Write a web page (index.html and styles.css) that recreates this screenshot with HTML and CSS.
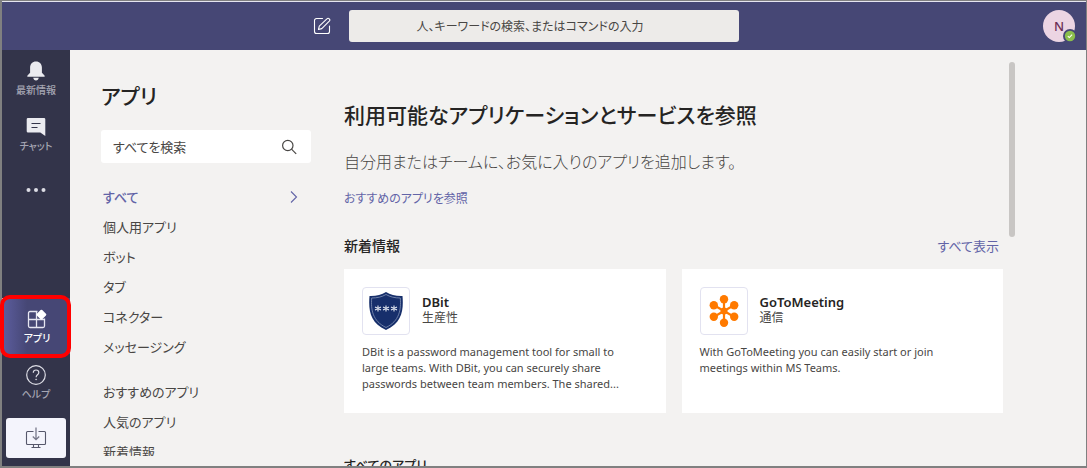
FILE: index.html
```html
<!DOCTYPE html>
<html lang="ja">
<head>
<meta charset="utf-8">
<title>アプリ</title>
<link rel="stylesheet" href="styles.css">
</head>
<body>
<div class="window">
  <header class="topbar">
    <div class="topbar-start">
      <button class="icon-button" type="button" aria-label="新しいチャット">
        <svg width="18" height="18" viewBox="0 0 18 18" fill="none" stroke="#fff" stroke-width="1.1" stroke-linecap="round" stroke-linejoin="round"><path d="M9.5 1.5H3.5a2 2 0 0 0-2 2v11a2 2 0 0 0 2 2h11a2 2 0 0 0 2-2V9"/><path d="M5.5 12.5l.8-3.4 7.6-7.2a1.6 1.6 0 0 1 2.4 2.3l-7.500 7.400-3.200.9z"/></svg>
      </button>
    </div>
    <input class="command" type="search" aria-label="検索" placeholder="人、キーワードの検索、またはコマンドの入力">
    <div class="topbar-end">
      <button class="avatar" type="button">N
        <svg class="presence" width="14" height="14" viewBox="0 0 14 14"><circle cx="7" cy="7" r="7" fill="#464775"/><circle cx="7" cy="7" r="5.200" fill="#8bbf4c"/><path d="M4.800 7.200l1.500 1.400 2.800-2.900" fill="none" stroke="#fff" stroke-width="1.100"/></svg>
      </button>
    </div>
  </header>
  <div class="body">
    <nav class="rail">
      <button class="rail-item" type="button">
        <svg width="20" height="20" viewBox="0 0 20 20" fill="#ebebf0"><path d="M10 .5c3.600 0 5.900 2.600 5.900 6v5.300l2.600 2.600c.5.7.2 1.400-.6 1.400H2.100c-.8 0-1.100-.7-.6-1.400l2.600-2.600V6.500c0-3.400 2.300-6 5.900-6zM7.200 16.800h5.600c-.3 1.600-1.300 2.700-2.800 2.700s-2.500-1.100-2.800-2.700z"/></svg>
        <span>最新情報</span>
      </button>
      <button class="rail-item" type="button">
        <svg width="20" height="20" viewBox="0 0 20 20"><path d="M2 1h16a1.300 1.300 0 0 1 1.300 1.300V19l-5-3.500H2a1.300 1.300 0 0 1-1.300-1.300V2.300A1.300 1.300 0 0 1 2 1z" fill="#ebebf0"/><path d="M5.500 6.500h9M5.500 10.500h6" stroke="#33344a" stroke-width="1.200"/></svg>
        <span>チャット</span>
      </button>
      <button class="rail-item rail-more" type="button" aria-label="その他">
        <svg width="20" height="6" viewBox="0 0 20 6" fill="#dcdce4"><circle cx="2.500" cy="3" r="2"/><circle cx="10" cy="3" r="2"/><circle cx="17.500" cy="3" r="2"/></svg>
      </button>
      <div class="rail-end">
        <button class="rail-item rail-active" type="button">
          <svg width="20" height="20" viewBox="0 0 20 20" fill="none" stroke="#e6e6f2" stroke-width="1.300"><path d="M10.500 2.500H3a1.500 1.500 0 0 0-1.500 1.500v13A1.500 1.500 0 0 0 3 18.500h13a1.500 1.500 0 0 0 1.500-1.500v-7.500M9.500 2.500v16M1.500 10.500h16"/><path d="M14.400 1.900l3.700 3.700-3.700 3.700-3.700-3.700z" fill="#fff" stroke="#fff" stroke-width="2.400" stroke-linejoin="round"/></svg>
          <span>アプリ</span>
        </button>
        <button class="rail-item" type="button">
          <svg width="20" height="20" viewBox="0 0 20 20" fill="none" stroke="#dedee6" stroke-width="1.200"><circle cx="10" cy="10" r="9.300"/><path d="M7.300 7.800c0-1.700 1.100-2.800 2.700-2.800s2.800 1 2.800 2.500c0 2.300-2.700 2.300-2.700 4.700"/><circle cx="10.100" cy="14.400" r=".5" fill="#dedee6" stroke-width=".6"/></svg>
          <span>ヘルプ</span>
        </button>
        <button class="download" type="button" aria-label="ダウンロード">
          <svg width="22" height="22" viewBox="0 0 22 22" fill="none" stroke="#56576b" stroke-width="1.100"><path d="M8.500 4.500h-6a1 1 0 0 0-1 1v11a1 1 0 0 0 1 1h17a1 1 0 0 0 1-1v-11a1 1 0 0 0-1-1h-6M8.500 17.500v3M13.500 17.500v3M6.500 20.500h9"/><path d="M11 .5v12M7.800 9.500l3.200 3.200 3.200-3.200" stroke="#77788a" stroke-width="1.300"/></svg>
        </button>
      </div>
    </nav>
    <aside class="sidebar">
      <h2 class="sidebar-title">アプリ</h2>
      <label class="search">
        <input type="search" aria-label="すべてを検索" placeholder="すべてを検索">
        <svg width="16" height="16" viewBox="0 0 16 16" fill="none" stroke="#484644" stroke-width="1.200"><circle cx="6.800" cy="6.500" r="5.200"/><path d="M10.500 10.200l4.700 4.700"/></svg>
      </label>
      <ul class="menu">
        <li><a class="current" href="#">すべて<svg width="8" height="12" viewBox="0 0 8 12" fill="none" stroke="#6264a7" stroke-width="1.100"><path d="M1 .5L6.500 6 1 11.500"/></svg></a></li>
        <li><a href="#">個人用アプリ</a></li>
        <li><a href="#">ボット</a></li>
        <li><a href="#">タブ</a></li>
        <li><a href="#">コネクター</a></li>
        <li><a href="#">メッセージング</a></li>
      </ul>
      <ul class="menu">
        <li><a href="#">おすすめのアプリ</a></li>
        <li><a href="#">人気のアプリ</a></li>
        <li><a href="#">新着情報</a></li>
      </ul>
    </aside>
    <main class="store">
      <h1>利用可能なアプリケーションとサービスを参照</h1>
      <p class="lead">自分用またはチームに、お気に入りのアプリを追加します。</p>
      <a class="browse" href="#">おすすめのアプリを参照</a>
      <div class="section-head">
        <h3>新着情報</h3>
        <a href="#">すべて表示</a>
      </div>
      <div class="cards">
        <article class="card">
          <div class="card-head">
            <div class="logo">
              <svg width="34" height="38" viewBox="0 0 34 38"><path d="M17 0c4.500 3 10 4.200 16.500 4 1.200 14-.5 27-16.500 34C1 31 -.7 18 .5 4 7 4.200 12.500 3 17 0z" fill="#172f6b"/><path d="M17 2.500c4.200 2.500 9 3.500 14.300 3.500.9 12-.9 23-14.300 29.500C3.600 29 1.800 18 2.700 6 8 6 12.800 5 17 2.500z" fill="none" stroke="#8494b8" stroke-width=".8"/><path d="M9 13.500v6M6 15l6 3M12 15l-6 3M17 13.500v6M14 15l6 3M20 15l-6 3M25 13.500v6M22 15l6 3M28 15l-6 3" stroke="#e4e8f1" stroke-width="1.100"/></svg>
            </div>
            <div class="card-title">
              <h4>DBit</h4>
              <p class="category">生産性</p>
            </div>
          </div>
          <p class="summary">DBit is a password management tool for small to large teams. With DBit, you can securely share passwords between team members. The shared...</p>
        </article>
        <article class="card">
          <div class="card-head">
            <div class="logo">
              <svg width="30" height="32" viewBox="0 0 30 32" fill="#ff7a00" stroke="#ff7a00" stroke-width="2.200"><path d="M15 4v24M5 10.200l20 11.600M25 10.200L5 21.800"/><g stroke="none"><circle cx="15" cy="16" r="3.500"/><circle cx="15" cy="4.200" r="4.200"/><circle cx="15" cy="27.800" r="4.200"/><circle cx="4.800" cy="10.200" r="4.200"/><circle cx="25.200" cy="10.200" r="4.200"/><circle cx="4.800" cy="21.800" r="4.200"/><circle cx="25.200" cy="21.800" r="4.200"/></g></svg>
            </div>
            <div class="card-title">
              <h4>GoToMeeting</h4>
              <p class="category">通信</p>
            </div>
          </div>
          <p class="summary">With GoToMeeting you can easily start or join meetings within MS Teams.</p>
        </article>
      </div>
      <h3 class="next-section">すべてのアプリ</h3>
    </main>
    <div class="scrollbar"><div class="thumb"></div></div>
  </div>
</div>
</body>
</html>
```
FILE: styles.css
```css
* { box-sizing: border-box; }

body, h1, h2, h3, h4, p, ul { margin: 0; padding: 0; }

body {
  font-family: "Noto Sans", "Noto Sans CJK JP", sans-serif;
  font-feature-settings: "palt";
  font-size: 13px;
  line-height: 20px;
  color: #484644;
}

button, input { font: inherit; font-feature-settings: inherit; color: inherit; border: 0; padding: 0; }
button { background: none; }
a { color: #6264a7; text-decoration: none; }
svg { display: block; flex: none; }
input::placeholder { color: #484644; opacity: 1; }

.window {
  display: flex;
  flex-direction: column;
  height: 100vh;
  border: 2px solid #808080;
  border-top-width: 1px;
  border-right-width: 1px;
  background: #f3f2f1;
}

.topbar {
  flex: none;
  display: grid;
  grid-template-columns: 1fr 36% 1fr;
  align-items: center;
  height: 49px;
  border-top: 1px solid #e6e6f0;
  background: #464775;
}
.topbar-start { display: flex; justify-content: flex-end; padding-right: 18px; }
.topbar-end { display: flex; justify-content: flex-end; padding-right: 11px; }

.command {
  width: 100%;
  height: 32px;
  padding: 0 16px 0 0;
  border-radius: 3px;
  background: #edebe9;
  font-size: 12px;
  text-align: center;
}

.avatar {
  position: relative;
  width: 32px;
  height: 32px;
  border-radius: 50%;
  background: #ecd5e3;
  color: #6b2f55;
  font-weight: 500;
}
.presence { position: absolute; right: -2px; bottom: -1px; }

.body { flex: 1; display: flex; min-height: 0; }

.rail {
  flex: none;
  display: flex;
  flex-direction: column;
  width: 68px;
  background: #33344a;
}
.rail-end { margin-top: auto; }
.rail-item {
  display: flex;
  flex-direction: column;
  align-items: center;
  gap: 3px;
  width: 100%;
  height: 56px;
  padding-top: 11px;
  color: #a5a5b2;
  font-size: 10px;
  font-weight: 500;
  line-height: 12px;
}
.rail-more { justify-content: center; padding: 0; }
.rail-active {
  position: relative;
  border-left: 2px solid #e2e2f6;
  background: linear-gradient(90deg, #5b5c9c, #464775 35%);
  color: #fff;
}
.rail-active::after {
  content: "";
  position: absolute;
  inset: -3px -1px -4px -4px;
  border: 4px solid #f00;
  border-radius: 10px;
}
.download {
  display: flex;
  align-items: center;
  justify-content: center;
  width: 60px;
  height: 40px;
  margin: 8px 4px;
  border-radius: 3px;
  background: #f4f4fc;
}

.sidebar {
  flex: none;
  width: 210px;
  margin: 32px 33px 10px 31px;
  overflow: hidden;
}
.sidebar-title {
  color: #252423;
  font-size: 21px;
  font-weight: 500;
  line-height: 28px;
}
.search {
  display: flex;
  align-items: center;
  height: 33px;
  margin: 20px 0 19px;
  padding: 0 14px 0 12px;
  border-radius: 3px;
  background: #fff;
}
.search input { flex: 1; min-width: 0; background: none; outline: 0; }

.menu { list-style: none; margin-bottom: 15px; }
.menu a {
  display: flex;
  align-items: center;
  justify-content: space-between;
  height: 30px;
  padding: 0 13px 0 2px;
  color: #484644;
}
.menu .current { color: #6264a7; font-weight: 500; }

.store { flex: 1; min-width: 0; padding-top: 49px; overflow: hidden; }
h1 {
  color: #252423;
  font-size: 21px;
  font-weight: 500;
  line-height: 32px;
}
.lead { margin-top: 19px; font-size: 16px; font-weight: 300; line-height: 24px; }
.browse { display: block; margin-top: 15px; font-size: 12px; }
.section-head { display: flex; justify-content: space-between; margin-top: 27px; padding-right: 4px; }
h3 { color: #252423; font-size: 14px; font-weight: 500; }

.cards {
  display: grid;
  grid-template-columns: 1fr 1fr;
  gap: 16px;
  margin-top: 13px;
}
.card { min-height: 144px; padding: 18px; background: #fff; }
.card-head { display: flex; align-items: center; gap: 12px; }
.card-title { padding-bottom: 3px; }
.logo {
  display: flex;
  align-items: center;
  justify-content: center;
  width: 48px;
  height: 48px;
  border: 1px solid #e2e2f0;
  border-radius: 4px;
}
h4 { color: #252423; font-size: 13px; font-weight: 600; line-height: 16px; }
.category { font-size: 12px; line-height: 16px; }
.summary { margin-top: 9px; padding-right: 12px; font-size: 11px; line-height: 16px; }
.next-section { margin-top: 42px; font-size: 13px; }

.scrollbar { flex: none; width: 83px; padding: 12px 0 0 6px; }
.thumb { width: 6px; height: 175px; border-radius: 3px; background: #c8c6c4; }
```
